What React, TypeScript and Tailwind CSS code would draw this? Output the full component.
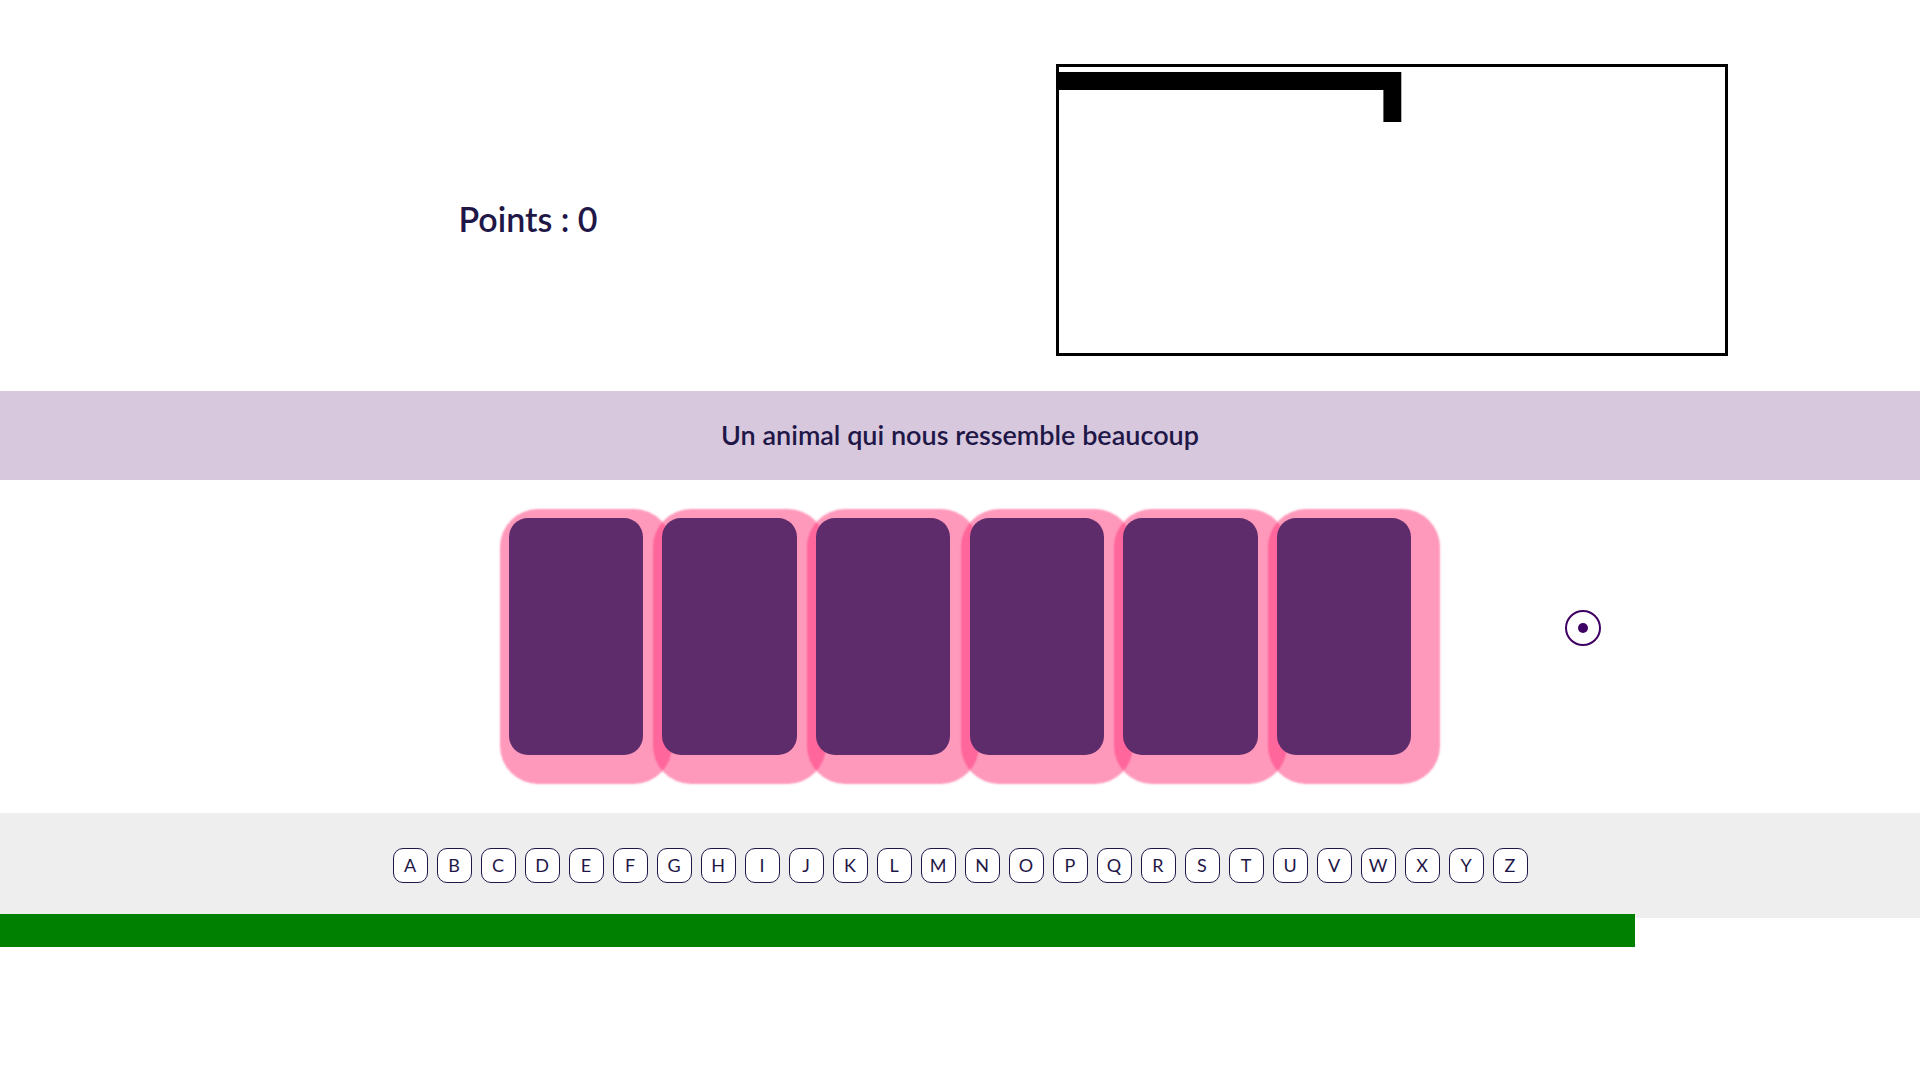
const LETTERS = 'ABCDEFGHIJKLMNOPQRSTUVWXYZ'.split('');
const WORD_LENGTH = 6;
const TIME_LEFT = 85.17;

function Score({ points }: { points: number }) {
  return (
    <p className="flex-1 pt-[46px] text-center text-[34px] leading-[44px] font-semibold">
      Points : {points}
    </p>
  );
}

function GallowsDrawing() {
  return (
    <div className="mt-16 mr-[10%] mb-[35px] h-[292px] w-[35%] border-3 border-black">
      <svg className="block h-full w-full" viewBox="0 0 666 286" preserveAspectRatio="none" aria-hidden="true">
        <path d="M0 5H342.3V55H324.4V23H0Z" fill="#000" />
      </svg>
    </div>
  );
}

function Card() {
  return (
    <li className="h-[237px] w-[7%] rounded-[19px] bg-[#5e2b6b] shadow-[10px_10px_2px_19px_rgba(255,51,122,0.5)]" />
  );
}

function LetterKey({ letter }: { letter: string }) {
  return (
    <button
      type="button"
      className="h-[35px] w-[35px] rounded-[10px] border border-[#1f1747] bg-white text-center text-[18px]"
    >
      {letter}
    </button>
  );
}

function CursorRing() {
  return (
    <div className="pointer-events-none absolute top-[610px] left-[1565px] flex size-9 items-center justify-center rounded-full border-2 border-[#3f0063]">
      <span className="size-[10px] rounded-full bg-[#3f0063]" />
    </div>
  );
}

export default function App() {
  return (
    <main className="relative min-h-screen overflow-x-hidden bg-white font-['Lato',sans-serif] text-[#1f1747]">
      <header className="flex items-center">
        <Score points={0} />
        <GallowsDrawing />
      </header>

      <h1 className="bg-[#d7c8dd] pt-6 pb-[25px] text-center text-[27px] leading-[40px] font-semibold">
        Un animal qui nous ressemble beaucoup
      </h1>

      <ul className="flex justify-center gap-[1%] pt-[38px] pb-[58px]">
        {Array.from({ length: WORD_LENGTH }, (_, i) => (
          <Card key={i} />
        ))}
      </ul>

      <div className="flex flex-wrap justify-center gap-[9px] bg-[#eeeeee] py-[35px]">
        {LETTERS.map((letter) => (
          <LetterKey key={letter} letter={letter} />
        ))}
      </div>

      <div
        role="progressbar"
        aria-label="Temps restant"
        aria-valuenow={TIME_LEFT}
        className="relative -mt-1 h-[33px] bg-[#008000]"
        style={{ width: `${TIME_LEFT}%` }}
      />

      <CursorRing />
    </main>
  );
}
